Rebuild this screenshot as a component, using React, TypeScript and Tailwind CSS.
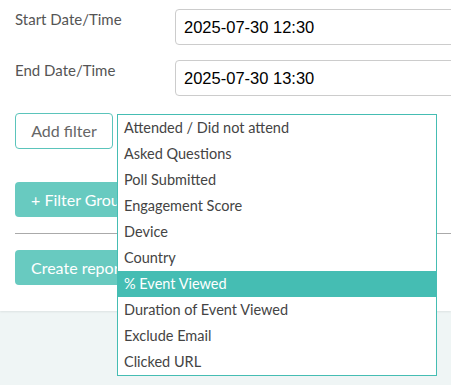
import React from "react";

const items = [
  "Attended / Did not attend",
  "Asked Questions",
  "Poll Submitted",
  "Engagement Score",
  "Device",
  "Country",
  "% Event Viewed",
  "Duration of Event Viewed",
  "Exclude Email",
  "Clicked URL",
];

export default function App() {
  return (
    <div className="w-[451px] h-[385px] overflow-hidden bg-[#eff5f5] relative" style={{ fontFamily: "Lato, 'Noto Sans', sans-serif" }}>
      <div className="bg-white pl-[15px] pt-[9px] pb-[26px] shadow-[0_1px_2px_rgba(0,0,0,0.08)] relative">
        <div className="flex items-start">
          <div className="w-[160px] shrink-0 text-[15px] leading-[20px] text-[#555]">Start Date/Time</div>
          <div className="w-[300px] h-[36px] shrink-0 border border-[#ccc] rounded-[4px] flex items-center pl-[8px] text-[16.5px] text-black" style={{ fontFamily: "'Liberation Sans', Arial, sans-serif" }}>2025-07-30 12:30</div>
        </div>
        <div className="flex items-start mt-[15px]">
          <div className="w-[160px] shrink-0 text-[15px] leading-[20px] text-[#555]">End Date/Time</div>
          <div className="w-[300px] h-[36px] shrink-0 border border-[#ccc] rounded-[4px] flex items-center pl-[8px] text-[16.5px] text-black" style={{ fontFamily: "'Liberation Sans', Arial, sans-serif" }}>2025-07-30 13:30</div>
        </div>
        <div className="mt-[17px] flex">
          <div className="w-[98px] h-[36px] border border-[#5bc4bb] rounded-[4px] flex items-center justify-center text-[16px] text-[#666]">Add filter</div>
        </div>
        <div className="mt-[33px] flex">
          <div className="h-[35px] px-[16px] bg-[#68cac0] rounded-[4px] flex items-center text-[16px] text-white">+ Filter Group</div>
        </div>
        <div className="mt-[16px] h-px bg-[#aaa]" />
        <div className="mt-[16px] flex">
          <div className="h-[35px] px-[16px] bg-[#68cac0] rounded-[4px] flex items-center text-[16px] text-white">Create report</div>
        </div>
        <div className="absolute left-[117px] top-[114px] w-[320px] bg-white border border-[#45bdb3] z-10">
          {items.map((it) => (
            <div
              key={it}
              className={
                it === "% Event Viewed"
                  ? "h-[26px] pl-[6px] flex items-center text-[14.5px] bg-[#45bdb3] text-white"
                  : "h-[26px] pl-[6px] flex items-center text-[14.5px] text-[#444]"
              }
            >
              {it}
            </div>
          ))}
        </div>
      </div>
    </div>
  );
}
